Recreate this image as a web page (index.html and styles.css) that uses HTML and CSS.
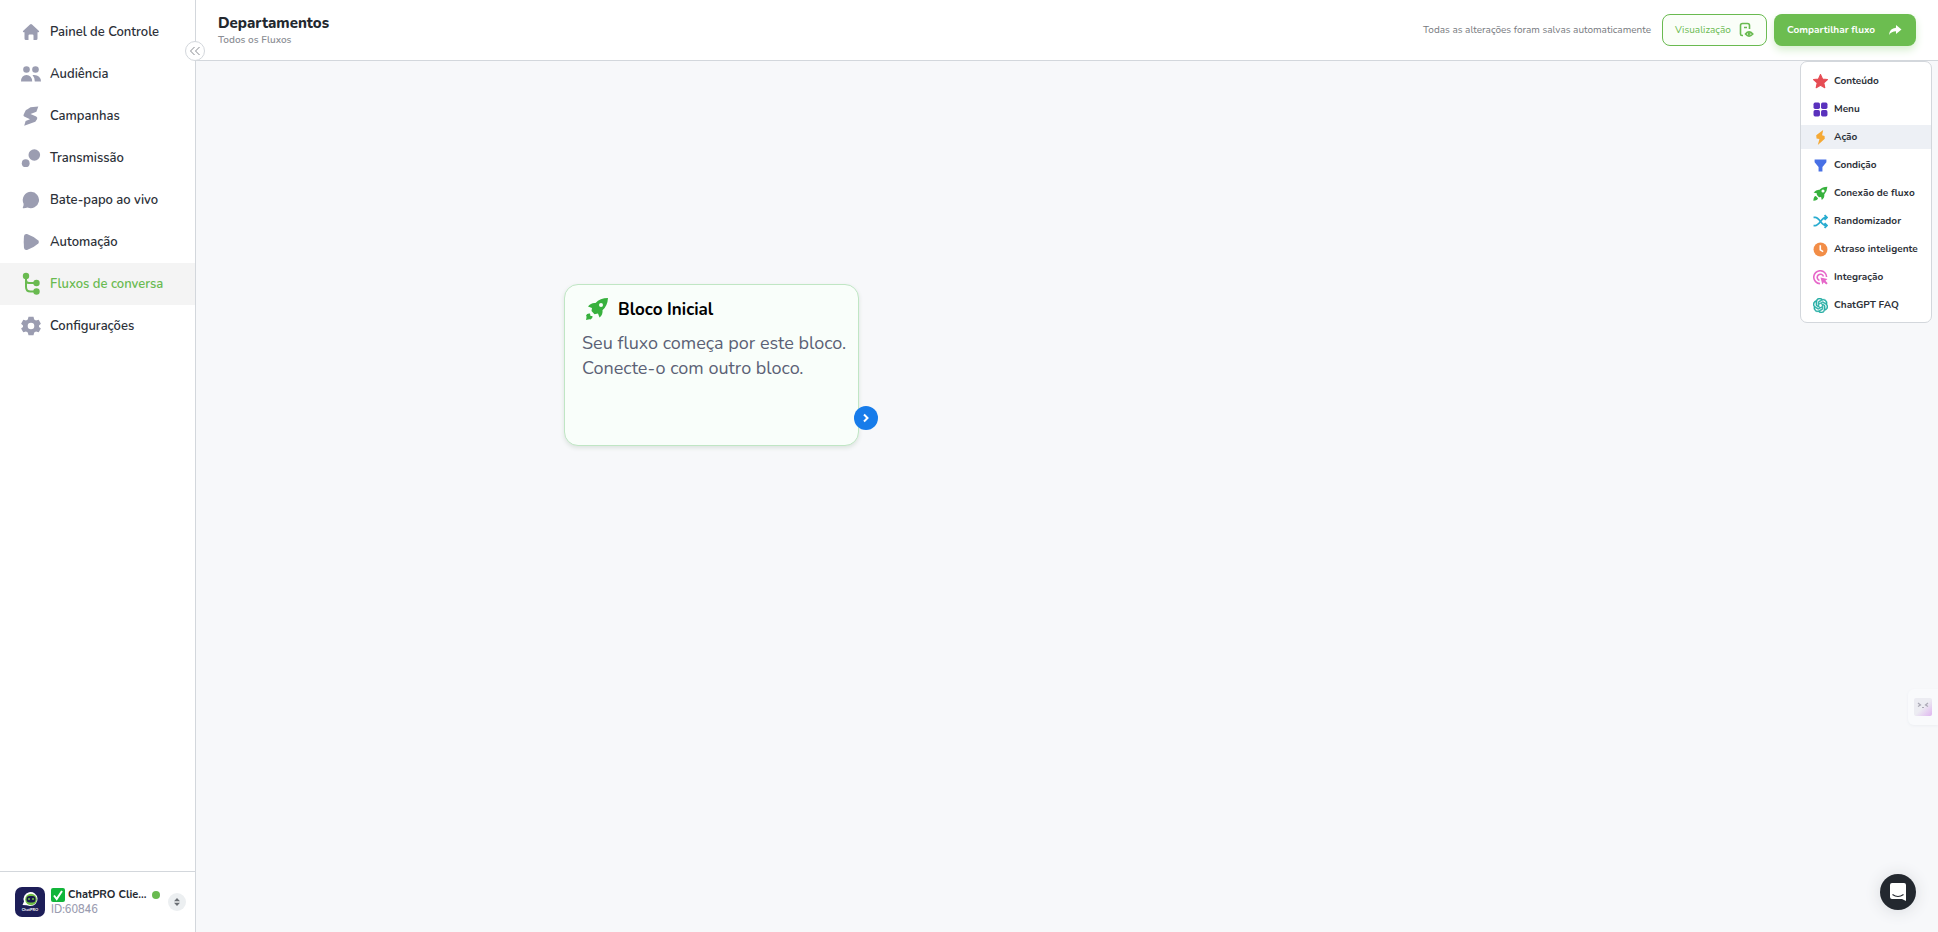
FILE: index.html
```html
<!DOCTYPE html>
<html lang="pt-BR">
<head>
<meta charset="utf-8">
<title>Departamentos</title>
<link rel="stylesheet" href="styles.css">
</head>
<body>
<div class="app">
  <aside class="sidebar">
    <nav class="nav">
      <a class="nav-item" href="#"><svg class="nav-icon" viewBox="0 0 20 20"><path d="M9 2.400Q10 1.600 11 2.400L18 9Q18.500 10 17.500 10.200H16.500V16.500Q16.500 18 15 18H12.500V13.500Q12.500 12.500 11.500 12.500H8.500Q7.500 12.500 7.500 13.500V18H5Q3.500 18 3.500 16.500V10.200H2.500Q1.500 10 2 9Z"/></svg>Painel de Controle</a>
      <a class="nav-item" href="#"><svg class="nav-icon" viewBox="0 0 20 20"><circle cx="5.500" cy="5.500" r="3.300"/><circle cx="14.500" cy="5.500" r="3.300"/><path d="M0 17.500Q.2 11 5.500 11T11.200 17.500ZM11.500 11Q19.600 10.200 20 17.500H13.800Q13.600 13.200 11.500 11Z"/></svg>Audiência</a>
      <a class="nav-item" href="#"><svg class="nav-icon" viewBox="0 0 20 20"><path d="M17.300.5L15.400 5.800L9.500 8L15.200 10.600Q17 11.600 16 13.200L14.300 15.700L3.200 19.800L4.600 15L9 13.200L3.200 10.600Q2 9.800 2.700 8.400L4.600 4.600Q5.300 3.500 6.500 3.200L9.500 1.200Z"/></svg>Campanhas</a>
      <a class="nav-item" href="#"><svg class="nav-icon" viewBox="0 0 20 20"><circle cx="13.300" cy="7" r="5.800"/><circle cx="4.700" cy="15.200" r="3.900"/></svg>Transmissão</a>
      <a class="nav-item" href="#"><svg class="nav-icon" viewBox="0 0 20 20"><path d="M10 1.800A8.200 8.200 0 1 1 6.500 17.500Q4.500 18.300 2 18.200Q1.500 18 2 17Q2.700 15.700 2.600 13.700A8.200 8.200 0 0 1 10 1.800Z"/></svg>Bate-papo ao vivo</a>
      <a class="nav-item" href="#"><svg class="nav-icon" viewBox="0 0 20 20"><path d="M3 4Q3.500 1.500 6 2Q13 4.500 17.300 8.500Q18.600 10 17.300 11.500Q13 15.500 6 18Q3.500 18.500 3 16Q2.400 10 3 4Z"/></svg>Automação</a>
      <a class="nav-item active" href="#"><svg class="nav-icon tall" viewBox="0 0 20 24"><circle cx="5" cy="4" r="3.200"/><circle cx="15.500" cy="11" r="3.200"/><circle cx="15.500" cy="19.500" r="3.200"/><path class="line" d="M5 4V15Q5 19.500 9.500 19.500H15M5 8Q5 11 8 11H15"/></svg>Fluxos de conversa</a>
      <a class="nav-item" href="#"><svg class="nav-icon" viewBox="0 0 20 20"><path fill-rule="evenodd" d="M7.500.8H12.500L13.200 3.600L15 4.600L17.700 3.800L19.900 7.800L18 9.500V11L19.900 12.500L17.700 16.200L15 15.500L13.200 16.500L12.500 19.300H7.500L6.800 16.500L5 15.500L2.300 16.200L.1 12.500L2 11V9.500L.1 7.800L2.300 3.800L5 4.600L6.800 3.600ZM10 6.700A3.300 3.300 0 1 0 10 13.300A3.300 3.300 0 1 0 10 6.700Z"/></svg>Configurações</a>
    </nav>
    <div class="account">
      <svg class="avatar" viewBox="0 0 30 30" aria-hidden="true"><rect width="30" height="30" rx="7" fill="#1d1e58"/><path d="M7.500 18L9 14.500A7 7 0 1 1 15 19Q12 18 7.500 18Z" fill="#fff"/><circle cx="16" cy="12.500" r="5.800" fill="#6fbd45"/><rect x="11.500" y="9" width="9" height="6.500" rx="3" fill="#17194a"/><circle cx="14" cy="12" r="1" fill="#6fbd45"/><circle cx="18" cy="12" r="1" fill="#6fbd45"/><text x="15" y="23.500" text-anchor="middle" class="avatar-text">ChatPRO</text></svg>
      <div class="account-info">
        <div class="account-name"><svg class="check" viewBox="0 0 14 14" aria-hidden="true"><rect width="14" height="14" rx="2" fill="#12b53a"/><path d="M3 7.500L5.700 11L11 3" fill="none" stroke="#fff" stroke-width="2"/></svg><span>ChatPRO Clie...</span><i class="online"></i></div>
        <div class="account-id">ID:60846</div>
      </div>
      <button class="switch" aria-label="Trocar conta"><svg viewBox="0 0 10 10"><path d="M2 4.200L5 1L8 4.200ZM2 5.800L5 9L8 5.800Z"/></svg></button>
    </div>
    <button class="collapse" aria-label="Recolher menu"><svg viewBox="0 0 12 12"><path d="M5.500 2L1.500 6L5.500 10M10.500 2L6.500 6L10.500 10"/></svg></button>
  </aside>
  <div class="main">
    <header class="header">
      <div class="heading"><h1>Departamentos</h1><p>Todos os Fluxos</p></div>
      <span class="saved">Todas as alterações foram salvas automaticamente</span>
      <button class="btn preview">Visualização<svg viewBox="0 0 16 16"><path d="M5 13.500H4Q2.500 13.500 2.500 12V3.500Q2.500 1.500 4.500 1.500H9.500Q11.500 1.500 11.500 3.500V7M6 5.500H9"/><path d="M7.500 12Q11 7.800 14.800 12Q11 16.200 7.500 12Z"/><circle cx="11.200" cy="12" r=".6"/></svg></button>
      <button class="btn share">Compartilhar fluxo<svg viewBox="0 0 16 16"><path d="M9 3L14.500 7.500L9 12V9.300Q4.500 9.300 2 13Q2.500 6.200 9 5.700Z"/></svg></button>
    </header>
    <main class="canvas">
      <section class="block">
        <h2><svg viewBox="0 0 24 24"><path fill-rule="evenodd" d="M23 1Q15 1 10.500 6Q6 5.500 3 9.500L7 11L6.500 14L9.500 17.200L13 16.500L14.500 20.500Q18.200 17.500 17.500 13.200Q22.500 9 23 1ZM16 6A2 2 0 1 1 16 10A2 2 0 1 1 16 6ZM5 16.500Q2 16 1 18.500Q2 19 1 23Q5 22 5.500 22.500Q8 21 7.500 19L5.500 19Z"/></svg>Bloco Inicial</h2>
        <p>Seu fluxo começa por este bloco.<br>Conecte-o com outro bloco.</p>
        <button class="connector" aria-label="Conectar"><svg viewBox="0 0 12 12"><path d="M4 2.500L7.500 6L4 9.500"/></svg></button>
      </section>
      <div class="menu">
        <button><svg viewBox="0 0 14 14" fill="#e64c54"><path d="M7 .5L8.900 4.700L13.500 5.200L10.100 8.300L11 12.800L7 10.600L3 12.800L3.900 8.300L.5 5.200L5.100 4.700Z" stroke="#e64c54" stroke-linejoin="round"/></svg>Conteúdo</button>
        <button><svg viewBox="0 0 14 14" fill="#5a31bd"><rect x=".5" y=".5" width="6" height="6" rx="1.500"/><rect x="7.500" y=".5" width="6" height="6" rx="1.500"/><rect x=".5" y="7.500" width="6" height="6" rx="1.500"/><rect x="7.500" y="7.500" width="6" height="6" rx="1.500"/></svg>Menu</button>
        <button class="hover"><svg viewBox="0 0 14 14" fill="#f5a935"><path d="M9.500 0L3 5L3.300 8L6 8.500L4.500 14L11 8.200L10.800 5.500L8.500 5Z"/></svg>Ação</button>
        <button><svg viewBox="0 0 14 14" fill="#4870e5"><path d="M1.500 1.500H12.500V4L8.800 8.500V12.500H5.200V8.500L1.500 4Z"/></svg>Condição</button>
        <button><svg viewBox="0 0 24 24" fill="#37b13d"><path fill-rule="evenodd" d="M23 1Q15 1 10.500 6Q5 5.500 1 10.500L6.500 12L6 14L9.500 18L13 17.500L14 22.500Q19 18.500 18 13.500Q22.500 9 23 1ZM16 5.500A2.500 2.500 0 1 1 16 10.500A2.500 2.500 0 1 1 16 5.500ZM4.500 16Q1 16 .5 23.500Q7.500 23 8 19.500Z"/></svg>Conexão de fluxo</button>
        <button><svg viewBox="0 0 14 14" fill="none" stroke="#29acd0" stroke-width="1.700"><path d="M.5 3.200H2Q4 3.200 7 7T12 10.800H13M.5 10.800H2Q4 10.800 7 7T12 3.200H13M10.800 1L13 3.200L10.800 5.400M10.800 8.600L13 10.800L10.800 13"/></svg>Randomizador</button>
        <button><svg viewBox="0 0 14 14" fill="#f28d47"><circle cx="7" cy="7" r="6.500"/><path d="M6.800 3V7.300L9.500 9" fill="none" stroke="#fff" stroke-width="1.500"/></svg>Atraso inteligente</button>
        <button><svg viewBox="0 0 14 14" fill="none" stroke="#e667c9" stroke-width="1.500"><path d="M6.500 12.700A6 6 0 1 1 12.700 6.500M6 9.800A3 3 0 1 1 9.800 6"/><path d="M7 7L13.500 8.500L11.600 10L13.700 12.300L12.400 13.600L10.100 11.500L8.700 13.500Z" fill="#e667c9" stroke="none"/></svg>Integração</button>
        <button><svg viewBox="0 0 24 24" fill="#24ada4" stroke="#24ada4" stroke-width=".9"><path d="M22.2819 9.8211a5.9847 5.9847 0 0 0-.5157-4.9108 6.0462 6.0462 0 0 0-6.5098-2.9A6.0651 6.0651 0 0 0 4.9807 4.1818a5.9847 5.9847 0 0 0-3.9977 2.9 6.0462 6.0462 0 0 0 .7427 7.0966 5.98 5.98 0 0 0 .511 4.9107 6.051 6.051 0 0 0 6.5146 2.9001A5.9847 5.9847 0 0 0 13.2599 24a6.0557 6.0557 0 0 0 5.7718-4.2058 5.9894 5.9894 0 0 0 3.9977-2.9001 6.0557 6.0557 0 0 0-.7475-7.0729zm-9.022 12.6081a4.4755 4.4755 0 0 1-2.8764-1.0408l.1419-.0804 4.7783-2.7582a.7948.7948 0 0 0 .3927-.6813v-6.7369l2.02 1.1686a.071.071 0 0 1 .038.052v5.5826a4.504 4.504 0 0 1-4.4945 4.4944zm-9.6607-4.1254a4.4708 4.4708 0 0 1-.5346-3.0137l.142.0852 4.783 2.7582a.7712.7712 0 0 0 .7806 0l5.8428-3.3685v2.3324a.0804.0804 0 0 1-.0332.0615L9.74 19.9502a4.4992 4.4992 0 0 1-6.1408-1.6464zM2.3408 7.8956a4.485 4.485 0 0 1 2.3655-1.9728V11.6a.7664.7664 0 0 0 .3879.6765l5.8144 3.3543-2.0201 1.1685a.0757.0757 0 0 1-.071 0l-4.8303-2.7865A4.504 4.504 0 0 1 2.3408 7.872zm16.5963 3.8558L13.1038 8.364 15.1192 7.2a.0757.0757 0 0 1 .071 0l4.8303 2.7913a4.4944 4.4944 0 0 1-.6765 8.1042v-5.6772a.79.79 0 0 0-.407-.667zm2.0107-3.0231l-.142-.0852-4.7735-2.7818a.7759.7759 0 0 0-.7854 0L9.409 9.2297V6.8974a.0662.0662 0 0 1 .0284-.0615l4.8303-2.7866a4.4992 4.4992 0 0 1 6.6802 4.66zM8.3065 12.863l-2.02-1.1638a.0804.0804 0 0 1-.038-.0567V6.0742a4.4992 4.4992 0 0 1 7.3757-3.4537l-.142.0805L8.704 5.459a.7948.7948 0 0 0-.3927.6813zm1.0976-2.3654l2.602-1.4998 2.6069 1.4998v2.9994l-2.5974 1.4997-2.6067-1.4997Z"/></svg>ChatGPT FAQ</button>
      </div>
      <button class="helper" aria-label="Assistente"><svg viewBox="0 0 18 18"><defs><linearGradient id="face" x1="0" y1="0" x2="1" y2="1"><stop offset=".5" stop-color="#ececf2"/><stop offset="1" stop-color="#dfb5f0"/></linearGradient></defs><rect width="18" height="18" rx="2" fill="url(#face)"/><path d="M4 5L6.500 7L4 8.500M14 5L11.500 7L14 8.500M8 9.500H10" fill="none" stroke="#aaa9b5" stroke-width="1.200"/></svg></button>
      <button class="chat" aria-label="Abrir chat"><svg viewBox="0 0 16 18"><path d="M2 0H14Q16 0 16 2V18L12 16H2Q0 16 0 14V2Q0 0 2 0Z" fill="#fff"/><path d="M2.500 11.500Q8 15.500 13.500 11.500" fill="none" stroke="#23282f" stroke-width="1.200"/></svg></button>
    </main>
  </div>
</div>
</body>
</html>
```
FILE: styles.css
```css
* { box-sizing: border-box; }
body { margin: 0; font-family: Nunito, "Noto Sans", sans-serif; color: #23282f; background: #f7f8fa; }
button { font: inherit; padding: 0; border: 0; cursor: pointer; }
h1, h2, p { margin: 0; }
.app { display: flex; min-height: 100vh; }

.sidebar { position: relative; display: flex; flex-direction: column; flex: 0 0 196px; background: #fff; border-right: 1px solid #d3d7dc; }
.nav { flex: 1; padding-top: 11px; }
.nav-item { display: flex; align-items: center; gap: 9px; height: 42px; padding-left: 21px; color: #2c3038; font-size: 13px; font-weight: 600; text-decoration: none; }
.nav-icon { width: 20px; height: 20px; fill: #9b9db1; }
.nav-icon.tall { height: 24px; }
.nav-item.active { background: #f4f4f4; color: #69ba50; }
.active .nav-icon { fill: #69ba50; }
.line { fill: none; stroke: #69ba50; stroke-width: 2; }
.collapse { position: absolute; top: 41px; right: -10px; z-index: 2; display: grid; place-items: center; width: 20px; height: 20px; border: 1px solid #d3d7dc; border-radius: 50%; background: #fff; }
.collapse svg { width: 12px; height: 12px; fill: none; stroke: #888b91; }

.account { display: flex; align-items: center; height: 61px; padding: 0 9px 0 15px; border-top: 1px solid #d3d7dc; }
.avatar { width: 30px; height: 30px; }
.avatar-text { font: 700 4px Lato, sans-serif; fill: #fff; }
.account-info { flex: 1; margin-left: 6px; font-size: 11px; line-height: 15px; }
.account-name { display: flex; align-items: center; gap: 3px; font-weight: 700; white-space: nowrap; }
.check { width: 14px; height: 14px; }
.online { width: 8px; height: 8px; margin-left: 3px; border-radius: 50%; background: #69ba50; }
.account-id { color: #9b9db1; font-weight: 600; }
.switch { display: grid; place-items: center; width: 18px; height: 18px; border-radius: 50%; background: #eceff1; }
.switch svg { width: 10px; height: 10px; fill: #6b6f75; }

.main { display: flex; flex: 1; flex-direction: column; min-width: 0; }
.header { display: flex; align-items: center; height: 61px; padding: 0 22px; background: #fff; border-bottom: 1px solid #d3d7dc; }
.heading { flex: 1; }
h1 { font-size: 15px; line-height: 19px; font-weight: 800; }
.heading p { font-size: 10px; line-height: 14px; font-weight: 600; color: #8b8e94; }
.saved { margin-right: 11px; font-size: 10px; color: #777a80; }
.btn { display: flex; align-items: center; justify-content: space-between; height: 32px; padding: 0 12px; border-radius: 8px; font-size: 10px; }
.btn svg { width: 16px; height: 16px; }
.preview { width: 105px; margin-right: 7px; border: 1px solid #69ba50; background: #fafef8; color: #69ba50; }
.preview svg { fill: none; stroke: #69ba50; stroke-width: 1.600; }
.share { width: 142px; padding: 0 13px; background: #6cbd50; color: #fff; font-weight: 700; box-shadow: 0 4px 8px #d6efcf; }
.share svg { fill: #fff; }

.canvas { position: relative; flex: 1; }
.block { position: absolute; left: 368px; top: 223px; width: 295px; height: 162px; padding: 13px 17px; border: 1px solid #c0e6c4; border-radius: 14px; background: #f9fefa; box-shadow: 0 2px 4px #dce3df; }
.block h2 { display: flex; align-items: center; gap: 9px; height: 22px; padding-left: 3px; color: #000; font-size: 17px; font-weight: 700; }
.block h2 svg { width: 24px; height: 24px; fill: #37b13d; }
.block p { margin-top: 11px; color: #5b6175; font-size: 18px; line-height: 25px; white-space: nowrap; }
.connector { position: absolute; right: -20px; bottom: 15px; display: grid; place-items: center; width: 24px; height: 24px; border-radius: 50%; background: #177cea; }
.connector svg { width: 12px; height: 12px; fill: none; stroke: #fff; stroke-width: 2; }

.menu { position: absolute; top: 0; right: 6px; display: flex; flex-direction: column; gap: 4px; width: 132px; padding: 7px 0 5px; border: 1px solid #d3d7dc; border-radius: 7px; background: #fff; }
.menu button { display: flex; align-items: center; gap: 6px; height: 24px; padding-left: 12px; background: none; color: #2c3038; font-size: 10px; font-weight: 700; text-align: left; white-space: nowrap; }
.menu button.hover { background: #edf0f5; }
.menu svg { width: 15px; height: 15px; }

.helper { position: absolute; right: 0; top: 628px; display: grid; align-items: center; width: 30px; height: 36px; padding-left: 6px; border-radius: 6px 0 0 6px; background: #f9fafc; box-shadow: 0 1px 3px #eceef2; }
.helper svg { width: 18px; height: 18px; }
.chat { position: absolute; right: 22px; bottom: 22px; display: grid; place-items: center; width: 36px; height: 36px; border-radius: 50%; background: #23282f; box-shadow: 0 1px 16px #d8dade; }
.chat svg { width: 16px; height: 18px; }
```
